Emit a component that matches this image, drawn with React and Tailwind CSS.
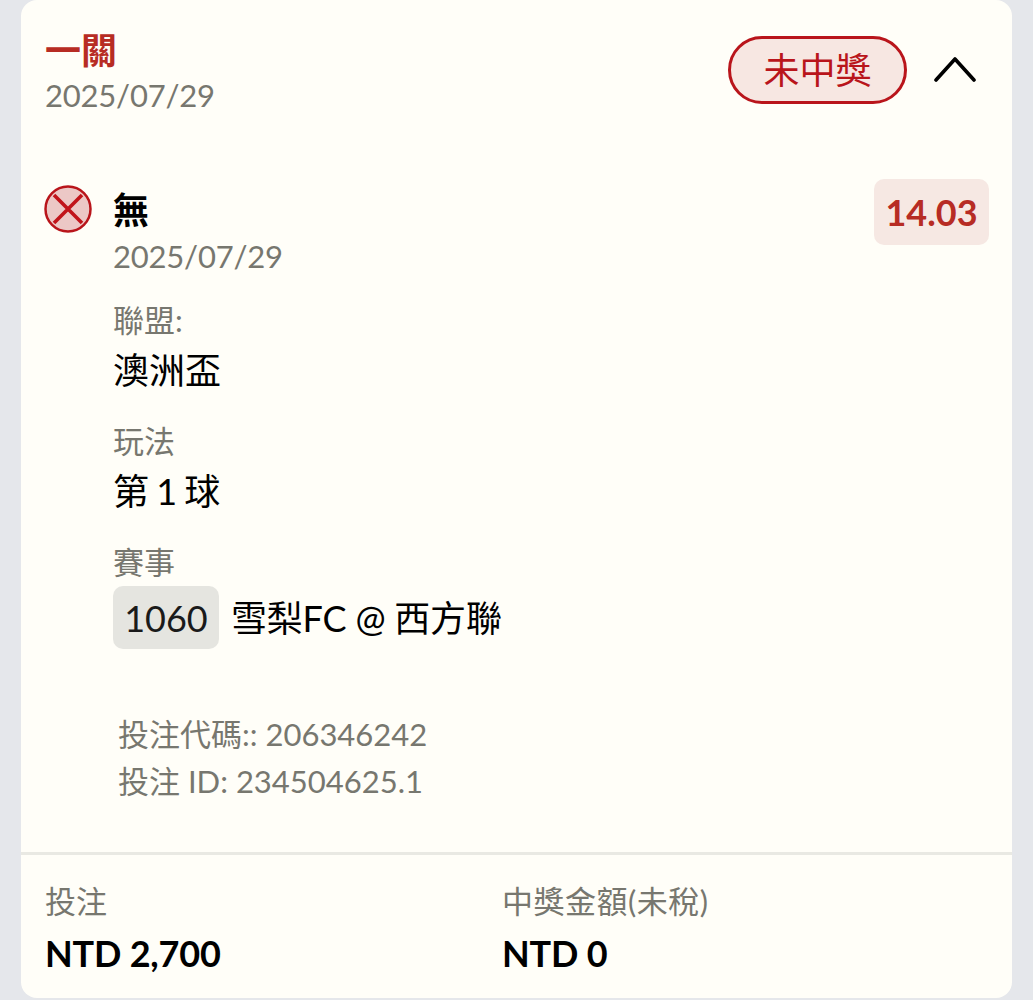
import React from 'react';

function Field({ label, children, first }) {
  return (
    <div className={first ? 'mt-[19px]' : 'mt-[21px]'}>
      <div className="text-[31px] leading-[48px] text-[#77776f]">{label}</div>
      <div className="text-[36px] leading-[52px] text-black">{children}</div>
    </div>
  );
}

export default function App() {
  return (
    <div className="h-[1000px] overflow-hidden bg-[#e5e7eb] px-[21px] font-['Lato','Noto_Sans_CJK_TC',sans-serif]">
      <div className="h-[998px] w-[991px] overflow-hidden rounded-[16px] bg-[#fffef8]">
        <div className="flex h-[852px] flex-col px-6">
          <div className="flex items-start justify-between pt-7">
            <div>
              <div className="text-[36px] font-bold leading-[44px] text-[#b72c24]">一關</div>
              <div className="text-[31px] leading-[46px] tracking-[-0.2px] text-[#77776f]">2025/07/29</div>
            </div>
            <div className="mr-[12px] mt-2 flex items-center gap-[27px]">
              <div className="flex h-[68px] w-[179px] items-center justify-center rounded-full border-[3px] border-[#b9151b] bg-[#f7e7e2] text-[36px] text-[#b9151b]">
                未中獎
              </div>
              <svg className="-mt-[3px]" width="42" height="26" viewBox="0 0 42 26" fill="none" stroke="#000" strokeWidth="3.6" strokeLinecap="round" strokeLinejoin="round">
                <path d="M2 24 L21 3 L40 24" />
              </svg>
            </div>
          </div>

          <div className="mt-[61px] flex items-start">
            <svg className="mt-[6px] -ml-[1px] shrink-0" width="48" height="48" viewBox="0 0 48 48">
              <circle cx="24" cy="24" r="22.5" fill="#ecc8c6" stroke="#b9151b" strokeWidth="2.5" />
              <path d="M10 10 L38 38 M38 10 L10 38" stroke="#c1141a" strokeWidth="3.6" />
            </svg>
            <div className="ml-[21px] flex-1">
              <div className="flex items-start justify-between">
                <div>
                  <div className="mt-[6px] text-[36px] font-bold leading-[50px] text-black">無</div>
                  <div className="text-[31px] leading-[42px] tracking-[-0.2px] text-[#77776f]">2025/07/29</div>
                </div>
                <div className="-mr-[1px] flex h-[66px] w-[115px] items-center justify-center rounded-[10px] bg-[#f6e8e3] text-[36px] font-bold text-[#b72c24]">
                  14.03
                </div>
              </div>

              <Field first label="聯盟:">澳洲盃</Field>
              <Field label="玩法"><span className="[word-spacing:-2px]">第 1 球</span></Field>
              <div className="mt-[21px]">
                <div className="text-[31px] leading-[48px] text-[#77776f]">賽事</div>
                <div className="flex items-center">
                  <span className="flex h-[63px] w-[106px] items-center justify-center rounded-[10px] bg-[#e5e5e0] text-[36px] text-[#1a1a1a]">
                    1060
                  </span>
                  <span className="ml-3 text-[36px] tracking-[-0.2px] text-black">雪梨FC @ 西方聯</span>
                </div>
              </div>

              <div className="ml-[5px] mt-[62px] text-[31px] leading-[47px] text-[#77776f]">
                <div>投注代碼:: 206346242</div>
                <div>投注 ID: 234504625.1</div>
              </div>
            </div>
          </div>
        </div>

        <div className="grid grid-cols-[457px_1fr] border-t-[3px] border-[#e9e9e3] px-6 pt-[23px]">
          <div>
            <div className="text-[31px] leading-[46px] text-[#77776f]">投注</div>
            <div className="mt-[3px] text-[36px] font-bold leading-[52px] tracking-[-0.2px] text-black">NTD 2,700</div>
          </div>
          <div>
            <div className="text-[31px] leading-[46px] tracking-[0.5px] text-[#77776f]">中獎金額(未稅)</div>
            <div className="mt-[3px] text-[36px] font-bold leading-[52px] tracking-[-0.2px] text-black">NTD 0</div>
          </div>
        </div>
      </div>
    </div>
  );
}
